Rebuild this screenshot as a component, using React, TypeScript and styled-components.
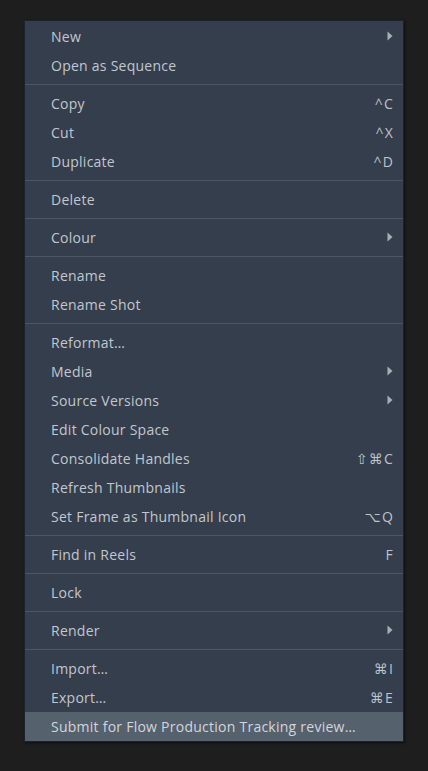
import React from "react";
import styled, { createGlobalStyle } from "styled-components";

const Global = createGlobalStyle`
  html, body { margin: 0; padding: 0; background: #1e1e1f; }
  body { width: 428px; height: 771px; overflow: hidden; }
`;

const Page = styled.div`
  width: 428px;
  height: 771px;
  background: #1e1e1f;
  padding: 20px 0 0 24px;
  box-sizing: border-box;
`;

const Menu = styled.ul`
  list-style: none;
  margin: 0;
  width: 380px;
  box-sizing: border-box;
  background: #343e4d;
  border: 1px solid #1b2230;
  padding: 1px 0 0 0;
  font-family: "Open Sans", "DejaVu Sans", sans-serif;
  font-size: 14px;
  color: #c3c7cd;
  box-shadow: 1px 1px 2px rgba(0, 0, 0, 0.5);
`;

const Row = styled.li<{ $active?: boolean }>`
  height: 29px;
  display: flex;
  align-items: center;
  justify-content: space-between;
  padding: 0 10px 1px 26px;
  box-sizing: border-box;
  background: ${(p) => (p.$active ? "#56616e" : "transparent")};
  color: ${(p) => (p.$active ? "#d2d6db" : "#c3c7cd")};
  white-space: nowrap;
`;

const Label = styled.span`
  letter-spacing: 0.25px;
`;

const Shortcut = styled.span`
  color: #bfc3ca;
  letter-spacing: 1.2px;
  margin-right: -1px;
`;

const Separator = styled.li`
  height: 9px;
  display: flex;
  align-items: center;
  &::after {
    content: "";
    flex: 1;
    height: 1px;
    background: #4a5767;
  }
`;

const Arrow = () => (
  <svg width="6" height="10" viewBox="0 0 6 10">
    <path d="M0.5 0.5 L5.5 5 L0.5 9.5 Z" fill="#a8aeb7" />
  </svg>
);

type Item =
  | { sep: true }
  | { label: string; shortcut?: string; sub?: boolean; active?: boolean };

const items: Item[] = [
  { label: "New", sub: true },
  { label: "Open as Sequence" },
  { sep: true },
  { label: "Copy", shortcut: "^C" },
  { label: "Cut", shortcut: "^X" },
  { label: "Duplicate", shortcut: "^D" },
  { sep: true },
  { label: "Delete" },
  { sep: true },
  { label: "Colour", sub: true },
  { sep: true },
  { label: "Rename" },
  { label: "Rename Shot" },
  { sep: true },
  { label: "Reformat…" },
  { label: "Media", sub: true },
  { label: "Source Versions", sub: true },
  { label: "Edit Colour Space" },
  { label: "Consolidate Handles", shortcut: "⇧⌘C" },
  { label: "Refresh Thumbnails" },
  { label: "Set Frame as Thumbnail Icon", shortcut: "⌥Q" },
  { sep: true },
  { label: "Find in Reels", shortcut: "F" },
  { sep: true },
  { label: "Lock" },
  { sep: true },
  { label: "Render", sub: true },
  { sep: true },
  { label: "Import…", shortcut: "⌘I" },
  { label: "Export…", shortcut: "⌘E" },
  { label: "Submit for Flow Production Tracking review…", active: true },
];

export default function App() {
  return (
    <>
      <Global />
      <Page>
        <Menu>
          {items.map((it, i) =>
            "sep" in it ? (
              <Separator key={i} />
            ) : (
              <Row key={i} $active={it.active}>
                <Label>{it.label}</Label>
                {it.shortcut && <Shortcut>{it.shortcut}</Shortcut>}
                {it.sub && <Arrow />}
              </Row>
            )
          )}
        </Menu>
      </Page>
    </>
  );
}
